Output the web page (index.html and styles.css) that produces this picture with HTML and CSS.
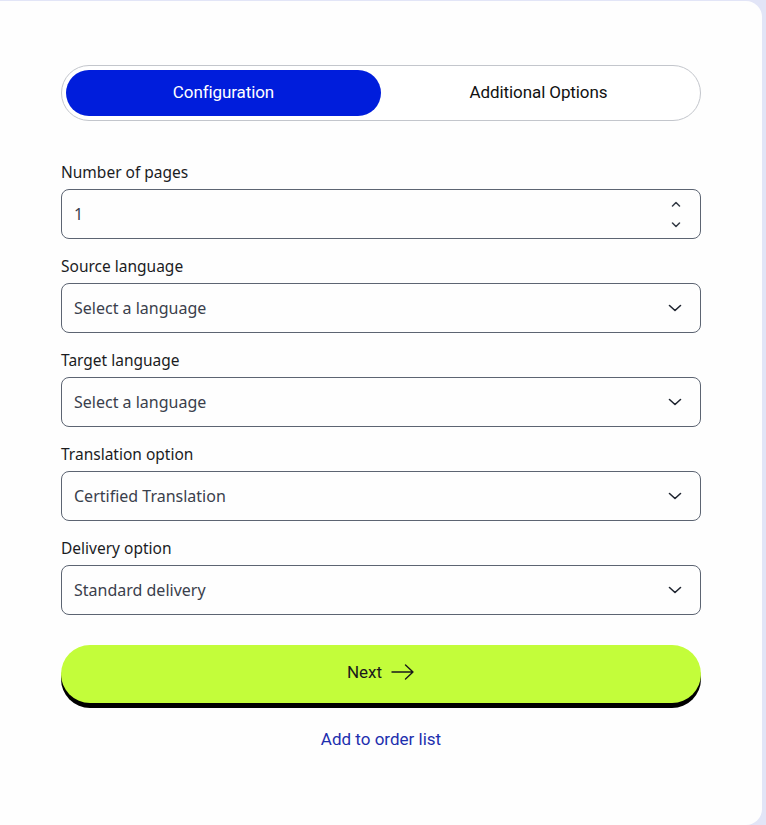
FILE: index.html
```html
<!DOCTYPE html>
<html lang="en">
<head>
<meta charset="utf-8">
<title>Order configuration</title>
<link rel="stylesheet" href="styles.css">
</head>
<body>
<main class="card">
  <div class="tabs">
    <button class="tab tab-active" type="button">Configuration</button>
    <button class="tab" type="button">Additional Options</button>
  </div>

  <form class="form">
    <div class="field">
      <label class="label">Number of pages</label>
      <div class="box">
        <span class="value">1</span>
        <span class="spinner">
          <svg width="10" height="6" viewBox="0 0 10 6"><path d="M1.5 5 L5 1.5 L8.5 5" fill="none" stroke="#333a45" stroke-width="1.5" stroke-linecap="round" stroke-linejoin="round"/></svg>
          <svg width="10" height="6" viewBox="0 0 10 6"><path d="M1.5 1 L5 4.5 L8.5 1" fill="none" stroke="#333a45" stroke-width="1.5" stroke-linecap="round" stroke-linejoin="round"/></svg>
        </span>
      </div>
    </div>

    <div class="field">
      <label class="label">Source language</label>
      <div class="box">
        <span class="value">Select a language</span>
        <svg class="chev" width="14" height="8" viewBox="0 0 14 8"><path d="M1.5 1.5 L7 6.5 L12.5 1.5" fill="none" stroke="#1f2530" stroke-width="1.6" stroke-linecap="round" stroke-linejoin="round"/></svg>
      </div>
    </div>

    <div class="field">
      <label class="label">Target language</label>
      <div class="box">
        <span class="value">Select a language</span>
        <svg class="chev" width="14" height="8" viewBox="0 0 14 8"><path d="M1.5 1.5 L7 6.5 L12.5 1.5" fill="none" stroke="#1f2530" stroke-width="1.6" stroke-linecap="round" stroke-linejoin="round"/></svg>
      </div>
    </div>

    <div class="field">
      <label class="label">Translation option</label>
      <div class="box">
        <span class="value">Certified Translation</span>
        <svg class="chev" width="14" height="8" viewBox="0 0 14 8"><path d="M1.5 1.5 L7 6.5 L12.5 1.5" fill="none" stroke="#1f2530" stroke-width="1.6" stroke-linecap="round" stroke-linejoin="round"/></svg>
      </div>
    </div>

    <div class="field">
      <label class="label">Delivery option</label>
      <div class="box">
        <span class="value">Standard delivery</span>
        <svg class="chev" width="14" height="8" viewBox="0 0 14 8"><path d="M1.5 1.5 L7 6.5 L12.5 1.5" fill="none" stroke="#1f2530" stroke-width="1.6" stroke-linecap="round" stroke-linejoin="round"/></svg>
      </div>
    </div>

    <button class="next" type="button">
      <span>Next</span>
      <svg width="24" height="16" viewBox="0 0 24 16"><path d="M1 8 H22 M14.5 1 L22 8 L14.5 15" fill="none" stroke="#1a1a1a" stroke-width="1.4" stroke-linecap="round" stroke-linejoin="round"/></svg>
    </button>

    <a class="add-link" href="#">Add to order list</a>
  </form>
</main>
</body>
</html>
```

FILE: styles.css
```css
* { box-sizing: border-box; }

html, body {
  margin: 0;
  padding: 0;
}

body {
  background: #e2e5f7;
  font-family: "Noto Sans", "Liberation Sans", sans-serif;
  color: #1a1a1a;
  height: 825px;
  overflow: hidden;
  padding: 1px 4px 0 0;
}

.card {
  background: #fefefe;
  height: 824px;
  border-radius: 0 16px 16px 0;
  padding: 64px 58px 0 61px;
}

.tabs {
  width: 640px;
  height: 56px;
  border: 1px solid #c3c6cc;
  border-radius: 28px;
  padding: 4px;
  display: flex;
  background: #fff;
}

.tab {
  flex: 0 0 315px;
  height: 46px;
  border: 0;
  border-radius: 23px;
  background: transparent;
  font-family: Roboto, "Liberation Sans", sans-serif;
  font-size: 17px;
  color: #111;
  padding: 0 0 3px 0;
  letter-spacing: -0.1px;
}

.tab + .tab {
  flex: 1;
}

.tab-active {
  background: #001ddc;
  color: #fff;
}

.form {
  margin-top: 40px;
  width: 640px;
  display: flex;
  flex-direction: column;
}

.field {
  display: flex;
  flex-direction: column;
  margin-bottom: 16px;
}

.label {
  font-size: 15.5px;
  line-height: 22px;
  color: #1b1c1f;
  margin-bottom: 6px;
}

.box {
  height: 50px;
  border: 1px solid #5c6472;
  border-radius: 8px;
  display: flex;
  align-items: center;
  padding: 0 18px 0 12px;
}

.value {
  flex: 1;
  font-size: 16px;
  color: #3a404c;
  padding-bottom: 1px;
}

.spinner {
  display: flex;
  flex-direction: column;
  gap: 15px;
  margin-right: 1px;
}

.spinner svg { display: block; }

.chev { display: block; }

.next {
  margin-top: 14px;
  height: 58px;
  border: 0;
  border-radius: 30px;
  background: #c3fd3a;
  box-shadow: 0 5px 0 #000;
  display: flex;
  align-items: center;
  justify-content: center;
  gap: 9px;
  font-family: Roboto, "Liberation Sans", sans-serif;
  font-size: 17px;
  color: #1a1a1a;
  padding: 0 0 5px 0;
}

.next svg { display: block; }

.add-link {
  margin-top: 26px;
  align-self: center;
  font-family: Roboto, "Liberation Sans", sans-serif;
  font-size: 17px;
  color: #1d2fae;
  text-decoration: none;
}
```
